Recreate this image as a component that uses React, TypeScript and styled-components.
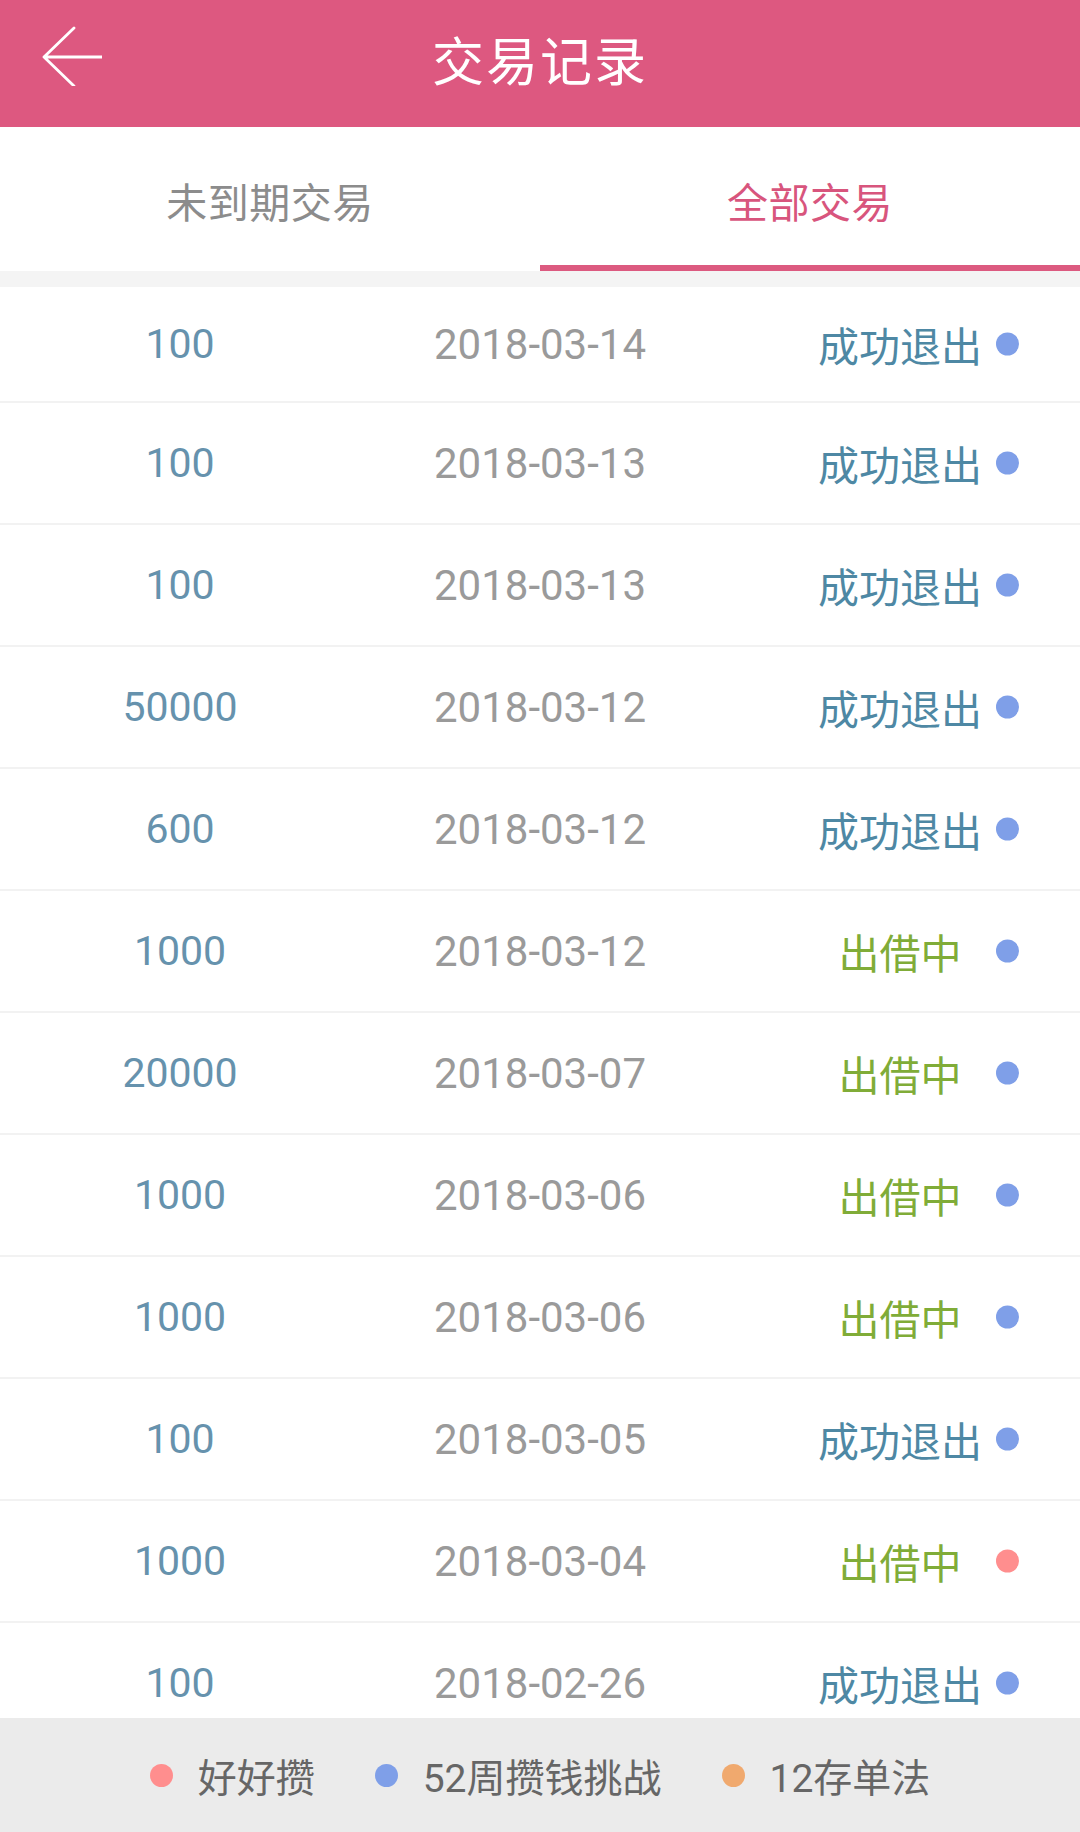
import React from "react";
import styled, { createGlobalStyle } from "styled-components";

const GlobalStyle = createGlobalStyle`
  html, body {
    margin: 0;
    padding: 0;
    background: #ffffff;
  }
  body {
    font-family: Roboto, "Noto Sans CJK SC", sans-serif;
  }
`;

const Page = styled.div`
  width: 1080px;
  height: 1832px;
  display: flex;
  flex-direction: column;
  overflow: hidden;
`;

const Header = styled.header`
  position: relative;
  height: 127px;
  flex: none;
  background: #dd5880;
  display: flex;
  align-items: center;
  justify-content: center;
  padding-bottom: 10px;
  box-sizing: border-box;
`;

const BackButton = styled.button`
  position: absolute;
  left: 38px;
  top: 24px;
  width: 66px;
  height: 64px;
  padding: 0;
  border: none;
  background: transparent;
  display: flex;
  align-items: center;
  justify-content: center;
`;

const Title = styled.h1`
  margin: 0;
  color: #ffffff;
  font-family: "Noto Sans CJK SC", sans-serif;
  font-weight: 400;
  font-size: 52px;
  letter-spacing: 2px;
  line-height: 1;
`;

const Tabs = styled.nav`
  height: 144px;
  flex: none;
  display: flex;
  background: #ffffff;
`;

const Tab = styled.div<{ $active?: boolean }>`
  flex: 1;
  display: flex;
  align-items: center;
  justify-content: center;
  padding-top: 8px;
  box-sizing: border-box;
  border-bottom: 6px solid ${(p) => (p.$active ? "#dc5a80" : "transparent")};
  color: ${(p) => (p.$active ? "#d8557d" : "#8c8c8c")};
  font-family: "Noto Sans CJK SC", sans-serif;
  font-size: 41px;
  letter-spacing: 0.5px;
  line-height: 1;
`;

const Gap = styled.div`
  height: 16px;
  flex: none;
  background: #f4f4f4;
`;

const List = styled.ul`
  flex: 1;
  margin: 0;
  padding: 0;
  list-style: none;
  overflow: hidden;
`;

const Row = styled.li`
  position: relative;
  height: 122px;
  box-sizing: border-box;
  border-bottom: 2px solid #f2f2f2;
  display: grid;
  grid-template-columns: 1fr 1fr 1fr;
  align-items: center;
  &:first-child {
    height: 116px;
  }
`;

const Amount = styled.span`
  text-align: center;
  color: #6692ad;
  font-size: 41px;
`;

const DateText = styled.span`
  text-align: center;
  color: #9a9a9a;
  font-size: 42px;
`;

const Status = styled.span<{ $done: boolean }>`
  text-align: center;
  color: ${(p) => (p.$done ? "#4e88a4" : "#80ac38")};
  font-family: "Noto Sans CJK SC", sans-serif;
  font-size: 41px;
`;

const Dot = styled.span<{ $color: string }>`
  display: inline-block;
  width: 23px;
  height: 23px;
  border-radius: 50%;
  background: ${(p) => p.$color};
  flex: none;
`;

const RowDot = styled(Dot)`
  position: absolute;
  right: 61px;
  top: 50%;
  transform: translateY(-50%);
`;

const Footer = styled.footer`
  height: 114px;
  flex: none;
  background: #ebebeb;
  display: flex;
  align-items: center;
  justify-content: center;
  gap: 60px;
`;

const Legend = styled.div`
  display: flex;
  align-items: center;
  gap: 25px;
  color: #666666;
  font-size: 39px;
  font-family: Roboto, "Noto Sans CJK SC", sans-serif;
`;

const BLUE = "#7f9fe8";
const PINK = "#ff8e8e";
const ORANGE = "#f0a96e";

const records = [
  { amount: "100", date: "2018-03-14", done: true, dot: BLUE },
  { amount: "100", date: "2018-03-13", done: true, dot: BLUE },
  { amount: "100", date: "2018-03-13", done: true, dot: BLUE },
  { amount: "50000", date: "2018-03-12", done: true, dot: BLUE },
  { amount: "600", date: "2018-03-12", done: true, dot: BLUE },
  { amount: "1000", date: "2018-03-12", done: false, dot: BLUE },
  { amount: "20000", date: "2018-03-07", done: false, dot: BLUE },
  { amount: "1000", date: "2018-03-06", done: false, dot: BLUE },
  { amount: "1000", date: "2018-03-06", done: false, dot: BLUE },
  { amount: "100", date: "2018-03-05", done: true, dot: BLUE },
  { amount: "1000", date: "2018-03-04", done: false, dot: PINK },
  { amount: "100", date: "2018-02-26", done: true, dot: BLUE }
];

const legends = [
  { label: "好好攒", color: PINK },
  { label: "52周攒钱挑战", color: BLUE },
  { label: "12存单法", color: ORANGE }
];

const BackArrow = () => (
  <svg width="62" height="60" viewBox="0 0 62 60" fill="none">
    <path
      d="M34 2 L4 31 L34 60 M4 31 L62 31"
      stroke="#ffffff"
      strokeWidth="2.8"
      strokeLinecap="round"
      strokeLinejoin="round"
    />
  </svg>
);

const App: React.FunctionComponent = () => (
  <Page>
    <GlobalStyle />
    <Header>
      <BackButton aria-label="返回">
        <BackArrow />
      </BackButton>
      <Title>交易记录</Title>
    </Header>
    <Tabs>
      <Tab>未到期交易</Tab>
      <Tab $active>全部交易</Tab>
    </Tabs>
    <Gap />
    <List>
      {records.map((r, i) => (
        <Row key={i}>
          <Amount>{r.amount}</Amount>
          <DateText>{r.date}</DateText>
          <Status $done={r.done}>{r.done ? "成功退出" : "出借中"}</Status>
          <RowDot $color={r.dot} />
        </Row>
      ))}
    </List>
    <Footer>
      {legends.map((l) => (
        <Legend key={l.label}>
          <Dot $color={l.color} />
          <span>{l.label}</span>
        </Legend>
      ))}
    </Footer>
  </Page>
);

export default App;
